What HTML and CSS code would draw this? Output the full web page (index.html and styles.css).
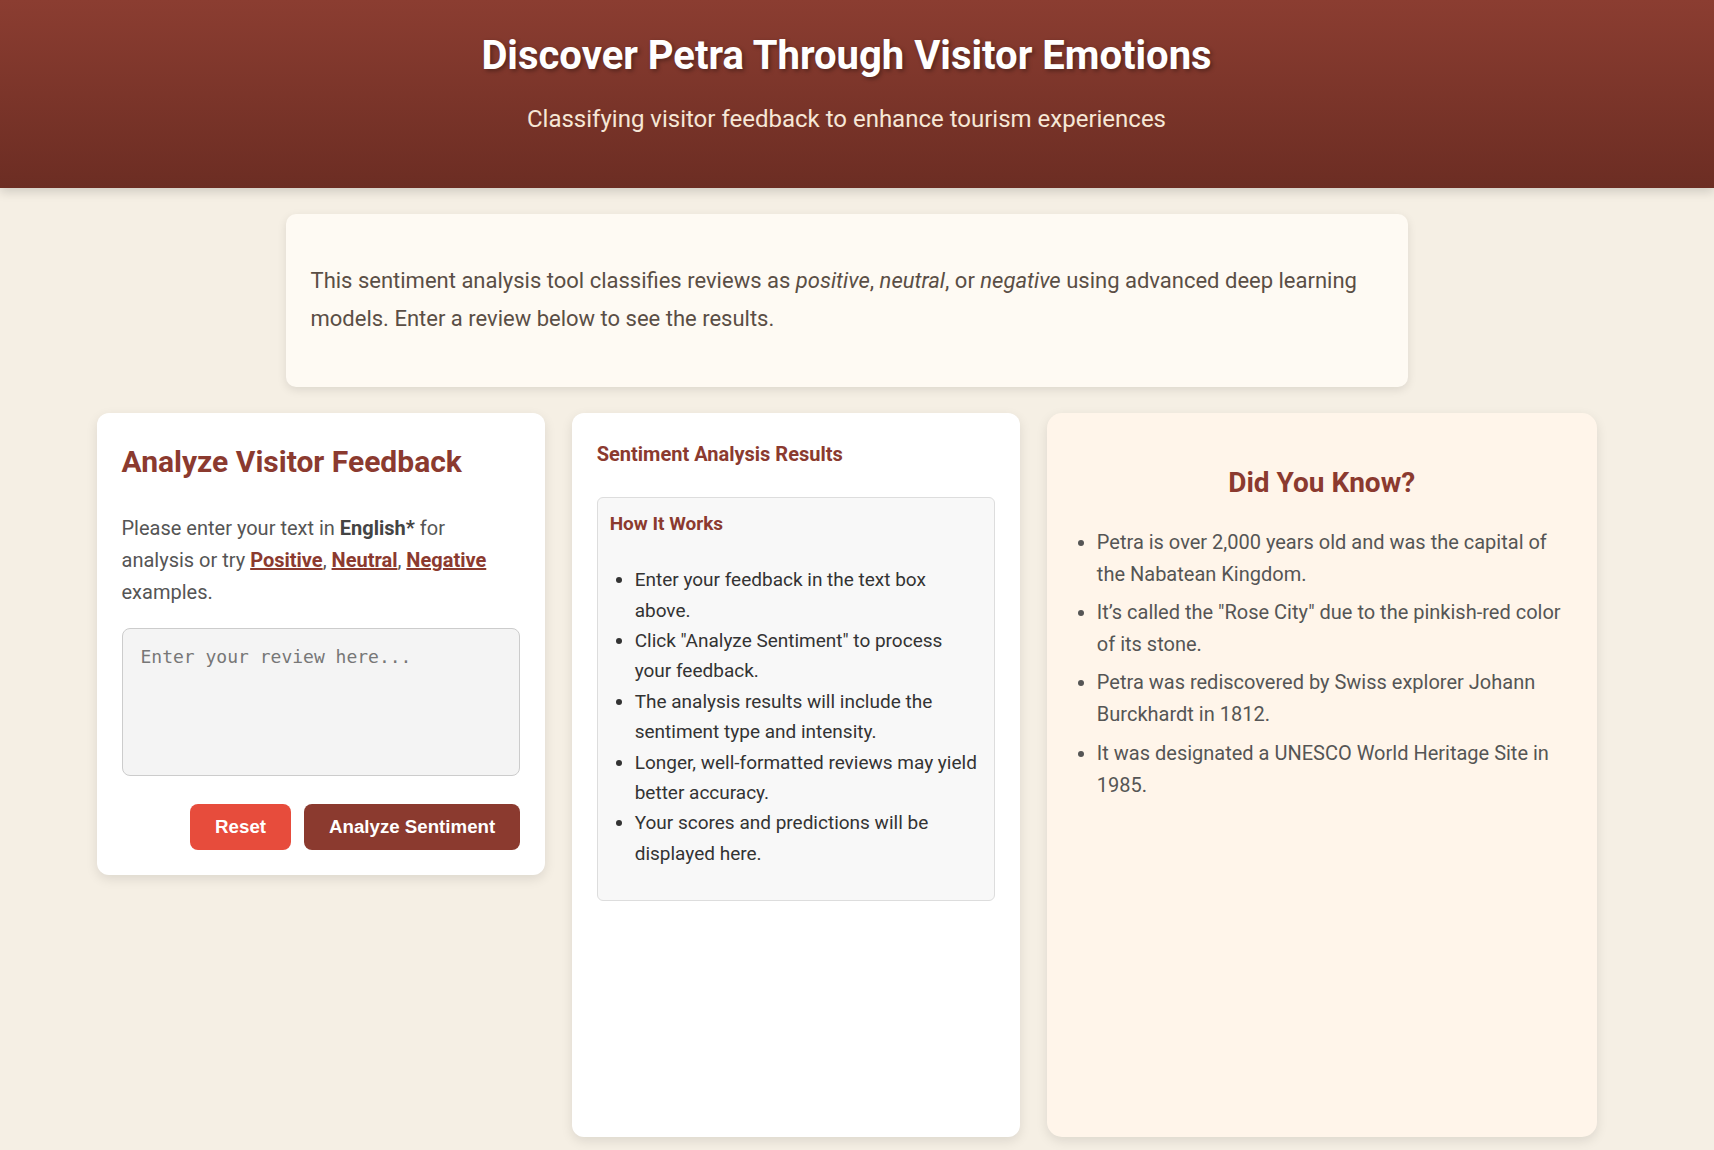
FILE: index.html
```html
<!DOCTYPE html>
<html lang="en">
<head>
<meta charset="utf-8">
<title>Discover Petra Through Visitor Emotions</title>
<link rel="stylesheet" href="styles.css">
</head>
<body>
<header class="hero">
  <h1 class="hero-title">Discover Petra Through Visitor Emotions</h1>
  <p class="hero-sub">Classifying visitor feedback to enhance tourism experiences</p>
</header>

<main class="page">
  <section class="intro">
    <p>This sentiment analysis tool classifies reviews as <em>positive</em>, <em>neutral</em>, or <em>negative</em> using advanced deep learning models. Enter a review below to see the results.</p>
  </section>

  <div class="columns">
    <section class="card card-input">
      <h2 class="card-title">Analyze Visitor Feedback</h2>
      <p class="lead">Please enter your text in <strong>English*</strong> for analysis or try <a href="#">Positive</a>, <a href="#">Neutral</a>, <a href="#">Negative</a> examples.</p>
      <textarea class="review" placeholder="Enter your review here..."></textarea>
      <div class="actions">
        <button class="btn btn-reset" type="button">Reset</button>
        <button class="btn btn-primary" type="button">Analyze Sentiment</button>
      </div>
    </section>

    <section class="card card-results">
      <h3 class="results-title">Sentiment Analysis Results</h3>
      <div class="how">
        <h4 class="how-title">How It Works</h4>
        <ul class="how-list">
          <li>Enter your feedback in the text box above.</li>
          <li>Click "Analyze Sentiment" to process your feedback.</li>
          <li>The analysis results will include the sentiment type and intensity.</li>
          <li>Longer, well-formatted reviews may yield better accuracy.</li>
          <li>Your scores and predictions will be displayed here.</li>
        </ul>
      </div>
    </section>

    <aside class="card card-facts">
      <h3 class="facts-title">Did You Know?</h3>
      <ul class="facts-list">
        <li>Petra is over 2,000 years old and was the capital of the Nabatean Kingdom.</li>
        <li>It’s called the "Rose City" due to the pinkish-red color of its stone.</li>
        <li>Petra was rediscovered by Swiss explorer Johann Burckhardt in 1812.</li>
        <li>It was designated a UNESCO World Heritage Site in 1985.</li>
      </ul>
    </aside>
  </div>
</main>
</body>
</html>
```

FILE: styles.css
```css
* { box-sizing: border-box; }

html, body {
  margin: 0;
  background: #f5efe4;
}

body {
  padding: 0 21px 0 0;
  font-family: Roboto, "Liberation Sans", Arial, sans-serif;
  font-size: 20px;
  line-height: 1.6;
  color: #555;
}

.hero {
  margin-right: -21px;
  padding: 32px 41px 50px 20px;
  text-align: center;
  background: linear-gradient(180deg, #8b3d31 0%, #6c2d23 100%);
  box-shadow: 0 4px 10px rgba(0, 0, 0, 0.15);
}

.hero-title {
  margin: 0 0 20px;
  font-size: 40px;
  line-height: 48px;
  font-weight: 700;
  color: #fff;
  text-shadow: 2px 2px 4px rgba(0, 0, 0, 0.35);
}

.hero-sub {
  margin: 0;
  font-size: 24px;
  line-height: 38px;
  color: #f6e7d6;
}

.page {
  max-width: 1500px;
  margin: 0 auto;
  padding: 26px 0 40px;
}

.intro {
  max-width: 1122px;
  margin: 0 auto 26px;
  padding: 26px 25px;
  background: #fefaf3;
  border-radius: 10px;
  box-shadow: 0 3px 10px rgba(0, 0, 0, 0.1);
}

.intro p {
  margin: 22px 0;
  font-size: 22px;
  line-height: 38.4px;
  color: #5a4e45;
}

.columns {
  display: grid;
  grid-template-columns: 1fr 1fr 1.225fr;
  gap: 26.5px;
  align-items: start;
}

.card {
  padding: 25px;
  background: #fff;
  border-radius: 12px;
  box-shadow: 0 4px 12px rgba(0, 0, 0, 0.1);
}

.card-title {
  margin: 0 0 26px;
  font-size: 30px;
  line-height: 48px;
  font-weight: 700;
  color: #8b3a2f;
}

.lead {
  margin: 0 0 20px;
  line-height: 32px;
  color: #555;
}

.lead strong { color: #444; }

.lead a {
  color: #8b3a2f;
  font-weight: 700;
  text-decoration: underline;
}

.review {
  display: block;
  width: 100%;
  height: 148px;
  padding: 17px 18px;
  font-family: "DejaVu Sans Mono", monospace;
  font-size: 18px;
  line-height: normal;
  color: #333;
  background: #f4f4f4;
  border: 1px solid #ccc;
  border-radius: 8px;
  resize: none;
}

.review::placeholder { color: #777; }

.actions {
  display: flex;
  justify-content: flex-end;
  gap: 13px;
  margin-top: 28px;
}

.btn {
  padding: 12.5px 25px;
  font-family: "Liberation Sans", Arial, sans-serif;
  font-size: 18.7px;
  font-weight: 700;
  line-height: 1.15;
  color: #fff;
  border: 0;
  border-radius: 8px;
  cursor: pointer;
}

.btn-reset { background: #e74c3c; }
.btn-primary { background: #8b3a2f; }

.card-results {
  min-height: 724px;
}

.results-title {
  margin: 0 0 27px;
  font-size: 20px;
  line-height: 32px;
  font-weight: 700;
  color: #8b3a2f;
}

.how {
  padding: 11px 12px 12px;
  background: #f8f8f8;
  border: 1px solid #ddd;
  border-radius: 6px;
}

.how-title {
  margin: 0 0 26px;
  font-size: 19px;
  line-height: 30.4px;
  font-weight: 700;
  color: #8b3a2f;
}

.how-list {
  margin: 19px 0;
  padding-left: 25px;
  font-size: 19px;
  line-height: 30.4px;
  color: #333;
}

.card-facts {
  align-self: stretch;
  background: #fff5ea;
  border-radius: 15px;
}

.facts-title {
  margin: 23px 0 20px;
  text-align: center;
  font-size: 28px;
  line-height: 44.8px;
  font-weight: 700;
  color: #8b3a2f;
}

.facts-list {
  margin: 0;
  padding-left: 25px;
  line-height: 32px;
  color: #555;
}

.facts-list li { margin-bottom: 6.3px; }
```
